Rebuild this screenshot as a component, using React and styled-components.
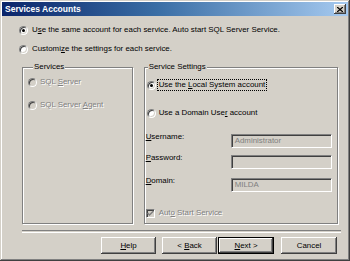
import React from "react";
import styled, { createGlobalStyle, css } from "styled-components";

const Global = createGlobalStyle`
  html, body { margin: 0; padding: 0; background: #d4d0c8; }
  body { font-family: "Liberation Sans", Arial, sans-serif; }
`;

const FACE = "#d4d0c8";
const SHADOW = "#808080";
const DARK = "#404040";

const Window = styled.div`
  box-sizing: border-box;
  width: 350px;
  height: 261px;
  padding: 2px;
  background: ${FACE};
  box-shadow: inset -1px -1px ${DARK}, inset 1px 1px ${FACE},
    inset -2px -2px ${SHADOW}, inset 2px 2px #fff;
  display: flex;
  flex-direction: column;
  font-family: "Liberation Sans", Arial, sans-serif;
  font-size: 7.9px;
  color: #000;
`;

const TitleBar = styled.div`
  height: 14px;
  display: flex;
  align-items: center;
  justify-content: space-between;
  padding: 0 2px 0 3px;
  background: linear-gradient(to right, #0a246a 0%, #3a6ea5 45%, #a6caf0 100%);
`;

const TitleText = styled.span`
  color: #fff;
  font-weight: bold;
  font-size: 8.5px;
  line-height: 14px;
`;

const CloseButton = styled.div`
  width: 12px;
  height: 10px;
  background: ${FACE};
  box-shadow: inset -1px -1px ${DARK}, inset 1px 1px #fff,
    inset -2px -2px ${SHADOW};
  display: flex;
  align-items: center;
  justify-content: center;
`;

const Body = styled.div`
  display: flex;
  flex-direction: column;
  padding: 0 10px 0 17px;
`;

const OptionRow = styled.div`
  display: flex;
  align-items: center;
  height: 10px;
  margin-top: ${(p) => p.$mt}px;
  margin-left: ${(p) => p.$ml || 0}px;
`;

const Radio = styled.span`
  box-sizing: border-box;
  flex: none;
  width: 9px;
  height: 9px;
  border-radius: 50%;
  border: 1px solid;
  border-color: ${SHADOW} #fff #fff ${SHADOW};
  box-shadow: inset 1px 1px ${DARK}, inset -1px -1px ${FACE};
  background: ${(p) => (p.$disabled ? FACE : "#fff")};
  display: flex;
  align-items: center;
  justify-content: center;
  margin-right: ${(p) => p.$gap}px;
  &::after {
    content: "";
    display: ${(p) => (p.$checked ? "block" : "none")};
    width: 3px;
    height: 3px;
    border-radius: 50%;
    background: ${(p) => (p.$disabled ? SHADOW : "#000")};
  }
`;

const CheckBox = styled.span`
  box-sizing: border-box;
  flex: none;
  width: 9px;
  height: 9px;
  border: 1px solid;
  border-color: ${SHADOW} #fff #fff ${SHADOW};
  box-shadow: inset 1px 1px ${DARK}, inset -1px -1px ${FACE};
  background: ${FACE};
  margin-right: 4px;
  display: flex;
  align-items: center;
  justify-content: center;
`;

const disabledText = css`
  color: ${SHADOW};
  text-shadow: 1px 1px 0 #fff;
`;

const Label = styled.span`
  line-height: 10px;
  white-space: nowrap;
  ${(p) => p.$disabled && disabledText}
  ${(p) =>
    p.$focus &&
    css`
      outline: 1px dotted #000;
      outline-offset: 0;
      padding: 0 1px;
      margin-left: -1px;
    `}
`;

const U = styled.span`
  text-decoration: underline;
`;

const Groups = styled.div`
  display: flex;
  height: 162px;
  margin-top: 8px;
  margin-left: 3px;
  gap: 11px;
`;

const GroupBox = styled.fieldset`
  box-sizing: border-box;
  margin: 0;
  min-width: 0;
  width: ${(p) => p.$w}px;
  border: 1px solid ${SHADOW};
  box-shadow: inset 1px 1px #fff, 1px 1px 0 #fff;
  padding: ${(p) => p.$pad};
  display: flex;
  flex-direction: column;
`;

const Legend = styled.legend`
  padding: 0 1px;
  margin-left: ${(p) => p.$ml}px;
  line-height: 10px;
  background: ${FACE};
  position: relative;
`;

const FieldRow = styled.div`
  display: flex;
  align-items: flex-start;
  margin-top: ${(p) => p.$mt}px;
`;

const FieldLabel = styled.span`
  width: 85px;
  line-height: 10px;
  margin-left: -1px;
`;

const TextBox = styled.div`
  box-sizing: border-box;
  width: 101px;
  height: 14px;
  margin-top: 2px;
  padding: 0 3px;
  border: 1px solid;
  border-color: ${SHADOW} #fff #fff ${SHADOW};
  box-shadow: inset 1px 1px ${DARK}, inset -1px -1px ${FACE};
  background: ${FACE};
  color: ${SHADOW};
  line-height: 12px;
`;

const Separator = styled.div`
  height: 1px;
  margin: 6px 0 0 3px;
  width: 319px;
  border-top: 1px solid ${SHADOW};
  border-bottom: 1px solid #fff;
`;

const ButtonRow = styled.div`
  display: flex;
  justify-content: flex-end;
  margin-top: 4px;
  padding-right: 1px;
`;

const PushButton = styled.div`
  box-sizing: border-box;
  width: ${(p) => p.$w}px;
  height: 17px;
  margin-left: ${(p) => p.$gap}px;
  display: flex;
  align-items: center;
  justify-content: center;
  background: ${FACE};
  box-shadow: ${(p) =>
    p.$default
      ? `inset 0 0 0 1px #000, inset -2px -2px ${DARK}, inset 2px 2px #fff, inset -3px -3px ${SHADOW}`
      : `inset -1px -1px ${DARK}, inset 1px 1px #fff, inset -2px -2px ${SHADOW}`};
`;

export default function App() {
  return (
    <>
      <Global />
      <Window>
        <TitleBar>
          <TitleText>Services Accounts</TitleText>
          <CloseButton>
            <svg width="6" height="5" viewBox="0 0 6 5">
              <path d="M0 0 L6 5 M6 0 L0 5" stroke="#000" strokeWidth="1.3" />
            </svg>
          </CloseButton>
        </TitleBar>
        <Body>
          <OptionRow $mt={9}>
            <Radio $checked $gap={4} />
            <Label>
              U<U>s</U>e the same account for each service. Auto start SQL Server Service.
            </Label>
          </OptionRow>
          <OptionRow $mt={9}>
            <Radio $gap={4} />
            <Label>
              Customi<U>z</U>e the settings for each service.
            </Label>
          </OptionRow>
          <Groups>
            <GroupBox $w={111} $pad="1px 4px 0 5px">
              <Legend $ml={5}>Services</Legend>
              <OptionRow $mt={4}>
                <Radio $disabled $gap={3} />
                <Label $disabled>
                  SQL <U>S</U>erver
                </Label>
              </OptionRow>
              <OptionRow $mt={13}>
                <Radio $disabled $gap={3} />
                <Label $disabled>
                  SQL Server <U>A</U>gent
                </Label>
              </OptionRow>
            </GroupBox>
            <GroupBox $w={195} $pad="0 4px 0 2px">
              <Legend $ml={1}>Service Settings</Legend>
              <OptionRow $mt={8}>
                <Radio $checked $gap={3} />
                <Label $focus>
                  Use the <U>L</U>ocal System account
                </Label>
              </OptionRow>
              <OptionRow $mt={18}>
                <Radio $gap={3} />
                <Label>
                  Use a Domain Use<U>r</U> account
                </Label>
              </OptionRow>
              <FieldRow $mt={14}>
                <FieldLabel>
                  <U>U</U>sername:
                </FieldLabel>
                <TextBox>Administrator</TextBox>
              </FieldRow>
              <FieldRow $mt={5}>
                <FieldLabel>
                  <U>P</U>assword:
                </FieldLabel>
                <TextBox />
              </FieldRow>
              <FieldRow $mt={7}>
                <FieldLabel>
                  <U>D</U>omain:
                </FieldLabel>
                <TextBox>MILDA</TextBox>
              </FieldRow>
              <OptionRow $mt={16} $ml={-1}>
                <CheckBox>
                  <svg width="7" height="7" viewBox="0 0 7 7">
                    <path d="M0.5 3 L2.5 5 L6.5 1" stroke={SHADOW} strokeWidth="1.5" fill="none" />
                  </svg>
                </CheckBox>
                <Label $disabled>
                  Aut<U>o</U> Start Service
                </Label>
              </OptionRow>
            </GroupBox>
          </Groups>
          <Separator />
          <ButtonRow>
            <PushButton $w={55} $gap={0}>
              <Label>
                <U>H</U>elp
              </Label>
            </PushButton>
            <PushButton $w={55} $gap={6}>
              <Label>
                &lt; <U>B</U>ack
              </Label>
            </PushButton>
            <PushButton $w={56} $gap={1} $default>
              <Label>
                <U>N</U>ext &gt;
              </Label>
            </PushButton>
            <PushButton $w={56} $gap={7}>
              <Label>Cancel</Label>
            </PushButton>
          </ButtonRow>
        </Body>
      </Window>
    </>
  );
}
